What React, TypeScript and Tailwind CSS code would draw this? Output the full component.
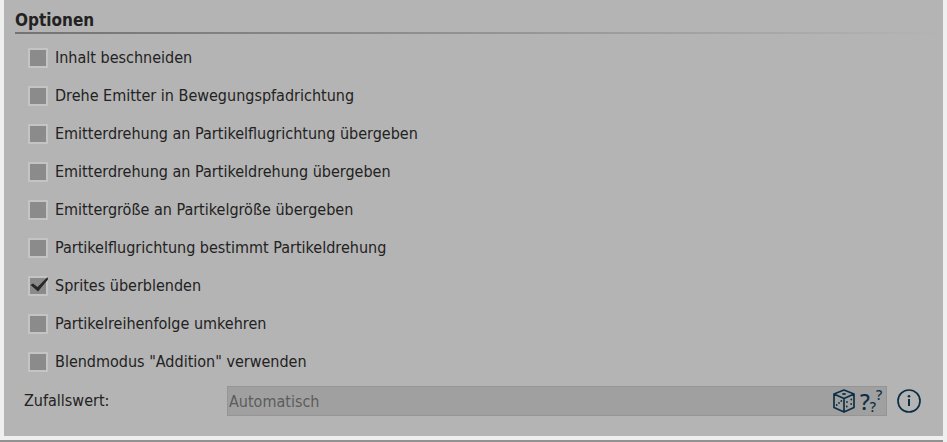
import { useState } from 'react';

const initialOptions = [
  { id: 'clip', label: 'Inhalt beschneiden', checked: false },
  { id: 'rotate-emitter', label: 'Drehe Emitter in Bewegungspfadrichtung', checked: false },
  { id: 'rotation-to-flight', label: 'Emitterdrehung an Partikelflugrichtung übergeben', checked: false },
  { id: 'rotation-to-particle', label: 'Emitterdrehung an Partikeldrehung übergeben', checked: false },
  { id: 'size-to-particle', label: 'Emittergröße an Partikelgröße übergeben', checked: false },
  { id: 'flight-sets-rotation', label: 'Partikelflugrichtung bestimmt Partikeldrehung', checked: false },
  { id: 'blend-sprites', label: 'Sprites überblenden', checked: true },
  { id: 'reverse-order', label: 'Partikelreihenfolge umkehren', checked: false },
  { id: 'additive', label: 'Blendmodus "Addition" verwenden', checked: false },
];

function DiceIcon() {
  return (
    <svg viewBox="0 0 24 24" className="h-6 w-6" fill="none" stroke="currentColor" strokeWidth="1.7" strokeLinejoin="round">
      <path d="M12 1 22 5v13.5L12 23 2 18.5V5zM2 5l10 4.5L22 5M12 9.5V23" />
      <g fill="currentColor" stroke="none">
        <ellipse cx="12" cy="5" rx="2" ry="0.9" />
        <circle cx="9.3" cy="12" r="0.9" />
        <circle cx="7" cy="14" r="0.9" />
        <circle cx="4.7" cy="16" r="0.9" />
        <circle cx="14.8" cy="17.5" r="0.9" />
        <circle cx="15" cy="13" r="0.9" />
        <circle cx="19.3" cy="10.5" r="0.9" />
        <circle cx="19.2" cy="15" r="0.9" />
      </g>
    </svg>
  );
}

function InfoIcon() {
  return (
    <svg viewBox="0 0 24 24" className="h-6 w-6" fill="none" stroke="currentColor">
      <circle cx="12" cy="12" r="11" strokeWidth="1.7" />
      <path d="M12 10v7" strokeWidth="2" />
      <circle cx="12" cy="7.3" r="1.3" fill="currentColor" stroke="none" />
    </svg>
  );
}

export default function App() {
  const [options, setOptions] = useState(initialOptions);
  const [seed, setSeed] = useState('');

  const toggle = (id: string) => {
    setOptions((prev) => prev.map((o) => (o.id === id ? { ...o, checked: !o.checked } : o)));
  };

  return (
    <div className="bg-[#efefef] font-['DejaVu_Sans_Condensed','Noto_Sans',sans-serif] text-base text-[#222222]">
      <main className="mx-1 bg-[#b4b4b4] pb-[15px]">
        <h2 className="ml-[11px] pt-2 text-[17px] leading-6 font-bold">Optionen</h2>
        <div className="ml-[11px] h-0.5 bg-linear-to-r from-[#737373] to-[#b4b4b4]" />

        <div className="pt-[5px]">
          {options.map((option) => (
            <label key={option.id} htmlFor={option.id} className="flex h-[38px] items-center gap-[7px] pl-6">
              <span className="relative flex">
                <input
                  id={option.id}
                  type="checkbox"
                  checked={option.checked}
                  onChange={() => toggle(option.id)}
                  className="h-5 w-5 appearance-none border-2 border-[#c4c4c4] bg-[#8b8b8b]"
                />
                {option.checked && (
                  <svg viewBox="0 0 20 20" className="pointer-events-none absolute inset-0 h-5 w-5" fill="#282828">
                    <path d="M2.500 9 5 7.500 9.500 11 19.500 1 20 3.500 10 15.500z" />
                  </svg>
                )}
              </span>
              {option.label}
            </label>
          ))}
        </div>

        <div className="flex h-10 items-center pr-[22px] pl-5">
          <label htmlFor="seed" className="w-[203px] shrink-0">
            Zufallswert:
          </label>
          <div className="flex h-[30px] min-w-0 flex-1 items-center border border-[#959595] bg-[#a0a0a0] pr-0.5 text-[#0d2f45]">
            <input
              id="seed"
              value={seed}
              onChange={(e) => setSeed(e.target.value)}
              placeholder="Automatisch"
              className="h-full min-w-0 flex-1 bg-transparent pl-px text-[#222222] outline-none placeholder:text-[#5c5c5c]"
            />
            <button type="button" aria-label="Zufallswert erzeugen" className="flex items-center gap-1">
              <DiceIcon />
              <span className="flex h-6 w-6 items-center font-['Noto_Sans',sans-serif] font-medium">
                <span className="text-[22px] leading-none">?</span>
                <span className="self-end text-sm leading-3">?</span>
                <span className="self-start text-sm leading-3">?</span>
              </span>
            </button>
          </div>
          <button type="button" aria-label="Information" className="ml-2.5 text-[#0d2f45]">
            <InfoIcon />
          </button>
        </div>
      </main>
      <div className="mt-1 mr-1 h-0.5 bg-[#929292]" />
    </div>
  );
}
